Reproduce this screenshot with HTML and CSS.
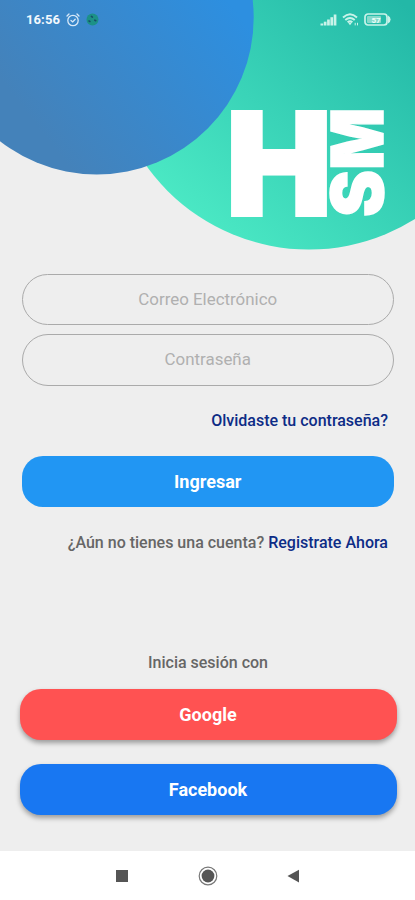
FILE: index.html
```html
<!DOCTYPE html>
<html lang="es">
<head>
    <meta charset="UTF-8">
    <meta name="viewport" content="width=device-width, initial-scale=1.0">
    <title>HSM</title>
    <link rel="stylesheet" href="styles.css">
</head>
<body>
    <div class="screen">
        <header class="header">
            <svg class="header-art" width="415" height="260" viewBox="0 0 415 260">
                <defs>
                    <linearGradient id="green" gradientUnits="userSpaceOnUse" x1="190" y1="230" x2="400" y2="0">
                        <stop offset="0" stop-color="#4ceac5"/>
                        <stop offset="1" stop-color="#23b8a7"/>
                    </linearGradient>
                    <linearGradient id="blue" gradientUnits="userSpaceOnUse" x1="40" y1="130" x2="220" y2="-10">
                        <stop offset="0" stop-color="#4482ba"/>
                        <stop offset="1" stop-color="#2d8fe0"/>
                    </linearGradient>
                </defs>
                <circle cx="309" cy="49.5" r="200" fill="url(#green)"/>
                <circle cx="96.7" cy="17.5" r="157" fill="url(#blue)"/>
                <g class="logo">
                    <text class="logo-h" transform="translate(226.5 214.5)" textLength="105" lengthAdjust="spacingAndGlyphs">H</text>
                    <text class="logo-sm" transform="translate(383 217) rotate(-90)" textLength="47" lengthAdjust="spacingAndGlyphs">S</text>
                    <text class="logo-sm" transform="translate(383 169.5) rotate(-90)" textLength="61.5" lengthAdjust="spacingAndGlyphs">M</text>
                </g>
            </svg>
            <div class="status-bar">
                <span class="time">16:56</span>
                <svg class="alarm" width="14" height="14" viewBox="0 0 14 14" fill="none" stroke="#d9e9f8" stroke-width="1.3" stroke-linecap="round">
                    <circle cx="7" cy="7.5" r="5.2"/>
                    <path d="M1 3L3 1M13 3L11 1M5 7.4l1.7 1.5L9.2 6.2"/>
                </svg>
                <svg class="app-dot" width="13" height="13" viewBox="0 0 13 13">
                    <circle cx="6.5" cy="6.5" r="6" fill="#1c9186"/>
                    <path d="M5.4 3.4l1 .7M3 8l.9.5M8.8 7.2l1 .5" stroke="#164e68" stroke-width="1.6" stroke-linecap="round"/>
                </svg>
                <div class="status-right">
                    <svg width="17" height="12" viewBox="0 0 17 12" fill="#c9f3e9">
                        <rect x="0.5" y="9.5" width="2.7" height="2"/>
                        <rect x="3.8" y="7.7" width="2.7" height="3.8"/>
                        <rect x="7.1" y="5.5" width="2.7" height="6"/>
                        <rect x="10.4" y="3.2" width="2.7" height="8.3"/>
                        <rect x="13.7" y="0.5" width="2.7" height="11"/>
                    </svg>
                    <svg class="wifi" width="17" height="13" viewBox="0 0 17 13" fill="none" stroke="#c9f3e9" stroke-width="1.9">
                        <path d="M1 4.5Q8 -2 15 4.5M3.3 7Q8 2.8 12.7 7M5.6 9.2Q8 7.2 10.4 9.2"/>
                        <path d="M6 9.5h4L8 12.2z" fill="#c9f3e9" stroke="none"/>
                        <path d="M13.2 9.8v2.6M15.5 9.8v2.6" stroke-width="1"/>
                    </svg>
                    <svg width="27" height="13" viewBox="0 0 27 13">
                        <rect x="1" y="1" width="22" height="11" rx="3" fill="none" stroke="#c9f3e9" stroke-width="1.7"/>
                        <rect x="3" y="3" width="14" height="7" rx="1" fill="#86dacb"/>
                        <path d="M24 2.5q2.6 1.5 2.6 4t-2.6 4z" fill="#c9f3e9"/>
                        <text class="battery" x="12" y="9.6" text-anchor="middle">57</text>
                    </svg>
                </div>
            </div>
        </header>
        <form class="login">
            <input type="text" class="field" placeholder="Correo Electrónico">
            <input type="password" class="field" placeholder="Contraseña">
            <a href="#" class="link forgot">Olvidaste tu contraseña?</a>
            <button type="button" class="button enter">Ingresar</button>
            <p class="register">¿Aún no tienes una cuenta? <a href="#" class="link">Registrate Ahora</a></p>
        </form>
        <div class="social">
            <p class="social-title">Inicia sesión con</p>
            <button type="button" class="button google">Google</button>
            <button type="button" class="button facebook">Facebook</button>
        </div>
        <nav class="nav-bar">
            <svg width="20" height="20" viewBox="0 0 20 20"><rect x="4" y="4" width="12" height="12" fill="#555"/></svg>
            <svg width="20" height="20" viewBox="0 0 20 20">
                <circle cx="10" cy="10" r="8.8" fill="none" stroke="#777" stroke-width="1.2"/>
                <circle cx="10" cy="10" r="6.4" fill="#555"/>
            </svg>
            <svg width="20" height="20" viewBox="0 0 20 20"><path d="M3.5 10L15 3.8v12.6z" fill="#555"/></svg>
        </nav>
    </div>
</body>
</html>
```
FILE: styles.css
```css
*
{
    box-sizing: border-box;
}

body
{
    margin: 0;
    background: #eeeeee;
    font-family: Roboto, "Liberation Sans", sans-serif;
}

p
{
    margin: 0;
}

.screen
{
    display: flex;
    flex-direction: column;
    width: 415px;
    height: 900px;
    overflow: hidden;
}

.header
{
    position: relative;
    height: 260px;
}

.header-art
{
    display: block;
}

.logo
{
    fill: white;
    stroke: white;
    font-family: Inter, "Liberation Sans", sans-serif;
    font-weight: 900;
}

.logo-h
{
    font-size: 141.5px;
    stroke-width: 4px;
}

.logo-sm
{
    font-size: 71px;
    stroke-width: 1.5px;
}

/* status bar lies over the circles */
.status-bar
{
    position: absolute;
    top: 0;
    left: 0;
    display: flex;
    align-items: center;
    width: 100%;
    height: 39px;
    padding: 0 24px 0 26px;
}

.time
{
    width: 34px;
    color: #f2f8fd;
    font-size: 13px;
    font-weight: 700;
    letter-spacing: 0.1px;
}

.alarm
{
    margin-left: 6px;
}

.app-dot
{
    margin-left: 6px;
}

.status-right
{
    display: flex;
    align-items: center;
    gap: 5px;
    margin-left: auto;
}

.battery
{
    fill: #f0fffb;
    font-size: 8px;
    font-weight: 700;
}

.login
{
    display: flex;
    flex-direction: column;
    padding: 13.5px 21px 0 21.5px;
}

.field
{
    height: 51.5px;
    margin-bottom: 9px;
    padding: 0 20px 1px;
    border: 1px solid #aaaaaa;
    border-radius: 26px;
    background: none;
    font-family: inherit;
    font-size: 16.9px;
    text-align: center;
}

.field:focus
{
    outline: none;
}

.field::placeholder
{
    color: #b0b0b0;
}

.link
{
    color: #0d2c86;
    text-decoration: none;
}

.forgot
{
    align-self: flex-end;
    margin: 16.5px 6px 0 0;
    font-size: 16px;
    font-weight: 500;
    line-height: 20px;
}

.button
{
    height: 51px;
    border: none;
    border-radius: 21px;
    color: white;
    font-family: inherit;
    font-size: 18px;
    font-weight: 700;
}

.enter
{
    margin-top: 24.5px;
    background: #2196f3;
}

.register
{
    margin: 26.5px 6px 0 0;
    color: #666666;
    font-size: 16px;
    font-weight: 500;
    line-height: 20px;
    text-align: right;
}

.social
{
    display: flex;
    flex-direction: column;
    margin-top: 100px;
    padding: 0 18.5px 0 19.5px;
}

.social-title
{
    margin-bottom: 16px;
    color: #666666;
    font-size: 16px;
    font-weight: 500;
    line-height: 20px;
    text-align: center;
}

.google,
.facebook
{
    box-shadow: 0 3px 5px rgba(0, 0, 0, 0.35);
}

.google
{
    margin-bottom: 24px;
    background: #ff5252;
}

.facebook
{
    background: #1877f2;
}

.nav-bar
{
    display: flex;
    align-items: center;
    justify-content: center;
    gap: 66px;
    height: 49px;
    margin-top: auto;
    background: white;
}
```
